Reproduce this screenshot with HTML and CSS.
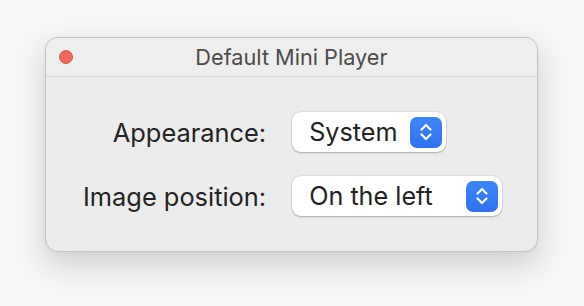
FILE: index.html
```html
<!DOCTYPE html>
<html lang="en">
<head>
    <meta charset="UTF-8">
    <title>Default Mini Player</title>
    <link rel="stylesheet" href="styles.css">
</head>
<body>
    <div class="window">
        <div class="titlebar">
            <span class="close-dot"></span>
            <div class="title">Default Mini Player</div>
        </div>
        <div class="settings">
            <label class="label">Appearance:</label>
            <div class="popup popup-short">
                <span class="popup-value">System</span>
                <span class="stepper">
                    <svg width="14" height="22" viewBox="0 0 14 22"><path d="M2.5 8.5 L7 4 L11.5 8.5 M2.5 13.5 L7 18 L11.5 13.5" fill="none" stroke="#fff" stroke-width="2.2" stroke-linecap="round" stroke-linejoin="round"/></svg>
                </span>
            </div>
            <label class="label">Image position:</label>
            <div class="popup popup-long">
                <span class="popup-value">On the left</span>
                <span class="stepper">
                    <svg width="14" height="22" viewBox="0 0 14 22"><path d="M2.5 8.5 L7 4 L11.5 8.5 M2.5 13.5 L7 18 L11.5 13.5" fill="none" stroke="#fff" stroke-width="2.2" stroke-linecap="round" stroke-linejoin="round"/></svg>
                </span>
            </div>
        </div>
    </div>
</body>
</html>
```

FILE: styles.css
```css
html {
    background-color: #f6f6f6;
}
body {
    margin: 0;
    padding: 37px 0 0 45px;
    min-height: 100vh;
    box-sizing: border-box;
    font-family: Inter, "Noto Sans", sans-serif;
    color: #222;
}
.window {
    width: 491px;
    height: 213px;
    background-color: #ececec;
    border: 1px solid #c2c2c2;
    border-radius: 13px;
    box-shadow: 0 12px 28px rgba(0, 0, 0, 0.16), 0 0 2px rgba(0, 0, 0, 0.08);
    overflow: hidden;
}
.titlebar {
    position: relative;
    height: 38px;
    border-bottom: 1px solid #d3d3d3;
    background-color: #eeeeee;
    display: flex;
    align-items: center;
    justify-content: center;
}
.close-dot {
    position: absolute;
    left: 13px;
    top: 12px;
    width: 12px;
    height: 12px;
    border-radius: 50%;
    background-color: #ed6a5e;
    border: 0.5px solid #d35a4f;
}
.title {
    font-size: 21.7px;
    color: #4b4b4b;
}
.settings {
    display: grid;
    grid-template-columns: auto auto;
    justify-content: start;
    align-items: center;
    column-gap: 26px;
    row-gap: 24px;
    padding: 35px 0 0 37px;
}
.label {
    text-align: right;
    font-size: 25.4px;
    color: #242424;
}
.popup {
    height: 40px;
    box-sizing: border-box;
    background-color: #fff;
    border-radius: 9px;
    box-shadow: 0 1px 2px rgba(0, 0, 0, 0.25), 0 0 0 0.5px rgba(0, 0, 0, 0.08);
    display: flex;
    align-items: center;
    justify-content: space-between;
    padding: 0 4px 0 17px;
}
.popup-short {
    width: 154px;
}
.popup-long {
    width: 210px;
}
.popup-value {
    font-size: 25.2px;
    color: #222;
}
.stepper {
    width: 32px;
    height: 31px;
    border-radius: 7px;
    background: linear-gradient(#3d86f7, #2f72ef);
    display: flex;
    align-items: center;
    justify-content: center;
}
```
